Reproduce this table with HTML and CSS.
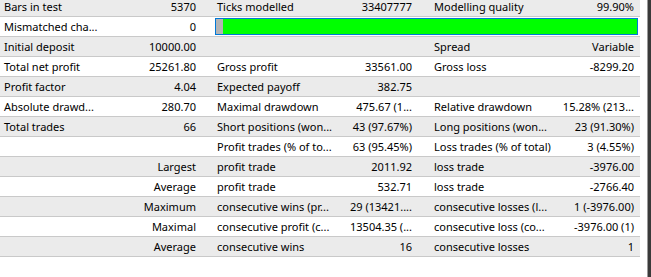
FILE: index.html
```html
<!DOCTYPE html>
<html lang="en">
<head>
<meta charset="utf-8">
<title>Strategy Tester Report</title>
<link rel="stylesheet" href="styles.css">
</head>
<body>
<div class="page">
  <div class="report">
    <div class="row shade">
      <span class="lbl">Bars in test</span><span class="val v1">5370</span>
      <span class="lbl">Ticks modelled</span><span class="val v2">33407777</span>
      <span class="lbl">Modelling quality</span><span class="val v3">99.90%</span>
    </div>
    <div class="row">
      <span class="lbl">Mismatched cha...</span><span class="val v1">0</span>
      <div class="quality"><div class="q-miss"></div><div class="q-fill"></div></div>
    </div>
    <div class="row shade">
      <span class="lbl">Initial deposit</span><span class="val v1">10000.00</span>
      <span class="lbl"></span><span class="val v2"></span>
      <span class="lbl">Spread</span><span class="val v3">Variable</span>
    </div>
    <div class="row">
      <span class="lbl">Total net profit</span><span class="val v1">25261.80</span>
      <span class="lbl">Gross profit</span><span class="val v2">33561.00</span>
      <span class="lbl">Gross loss</span><span class="val v3">-8299.20</span>
    </div>
    <div class="row shade">
      <span class="lbl">Profit factor</span><span class="val v1">4.04</span>
      <span class="lbl">Expected payoff</span><span class="val v2">382.75</span>
      <span class="lbl"></span><span class="val v3"></span>
    </div>
    <div class="row">
      <span class="lbl">Absolute drawd...</span><span class="val v1">280.70</span>
      <span class="lbl">Maximal drawdown</span><span class="val v2">475.67 (1...</span>
      <span class="lbl">Relative drawdown</span><span class="val v3">15.28% (213...</span>
    </div>
    <div class="row shade">
      <span class="lbl">Total trades</span><span class="val v1">66</span>
      <span class="lbl">Short positions (won...</span><span class="val v2">43 (97.67%)</span>
      <span class="lbl">Long positions (won...</span><span class="val v3">23 (91.30%)</span>
    </div>
    <div class="row">
      <span class="lbl"></span><span class="val v1"></span>
      <span class="lbl">Profit trades (% of to...</span><span class="val v2">63 (95.45%)</span>
      <span class="lbl">Loss trades (% of total)</span><span class="val v3">3 (4.55%)</span>
    </div>
    <div class="row shade">
      <span class="lbl"></span><span class="val v1">Largest</span>
      <span class="lbl">profit trade</span><span class="val v2">2011.92</span>
      <span class="lbl">loss trade</span><span class="val v3">-3976.00</span>
    </div>
    <div class="row">
      <span class="lbl"></span><span class="val v1">Average</span>
      <span class="lbl">profit trade</span><span class="val v2">532.71</span>
      <span class="lbl">loss trade</span><span class="val v3">-2766.40</span>
    </div>
    <div class="row shade">
      <span class="lbl"></span><span class="val v1">Maximum</span>
      <span class="lbl">consecutive wins (pr...</span><span class="val v2">29 (13421....</span>
      <span class="lbl">consecutive losses (l...</span><span class="val v3">1 (-3976.00)</span>
    </div>
    <div class="row">
      <span class="lbl"></span><span class="val v1">Maximal</span>
      <span class="lbl">consecutive profit (c...</span><span class="val v2">13504.35 (...</span>
      <span class="lbl">consecutive loss (co...</span><span class="val v3">-3976.00 (1)</span>
    </div>
    <div class="row shade">
      <span class="lbl"></span><span class="val v1">Average</span>
      <span class="lbl">consecutive wins</span><span class="val v2">16</span>
      <span class="lbl">consecutive losses</span><span class="val v3">1</span>
    </div>
  </div>
  <div class="edge"></div>
</div>
</body>
</html>
```
FILE: styles.css
```css
html, body {
  margin: 0;
  padding: 0;
  background: #ffffff;
}

body {
  font-family: "Noto Sans", "Open Sans", sans-serif;
  font-size: 11px;
  color: #000000;
  overflow: hidden;
}

.page {
  display: flex;
  height: 277px;
  overflow: hidden;
}

.report {
  width: 640px;
  margin-top: -3px;
  flex: none;
}

.row {
  display: grid;
  grid-template-columns: 104px 109px 127px 90px 126px 84px;
  height: 19px;
  line-height: 19px;
  border-bottom: 1px solid #c9c9c9;
  background: #ffffff;
}

.row.shade {
  background: #ebebeb;
}

.lbl {
  padding-left: 4px;
  white-space: nowrap;
  overflow: hidden;
}

.val {
  text-align: right;
  white-space: nowrap;
  overflow: hidden;
}

.v1 { padding-right: 17px; }
.v2 { padding-right: 18px; }
.v3 { padding-right: 6px; }

.quality {
  grid-column: 3 / 7;
  margin: 1px 2px 1px 2px;
  border: 1px solid #0078d7;
  display: flex;
}

.q-miss {
  width: 7px;
  background: #b4b4b4;
}

.q-fill {
  flex: 1;
  background: #00ff00;
}

.edge {
  margin-left: auto;
  width: 3px;
  border-left: 1px solid #9b9b9b;
  background: #3a3a3a;
  flex: none;
}
```
